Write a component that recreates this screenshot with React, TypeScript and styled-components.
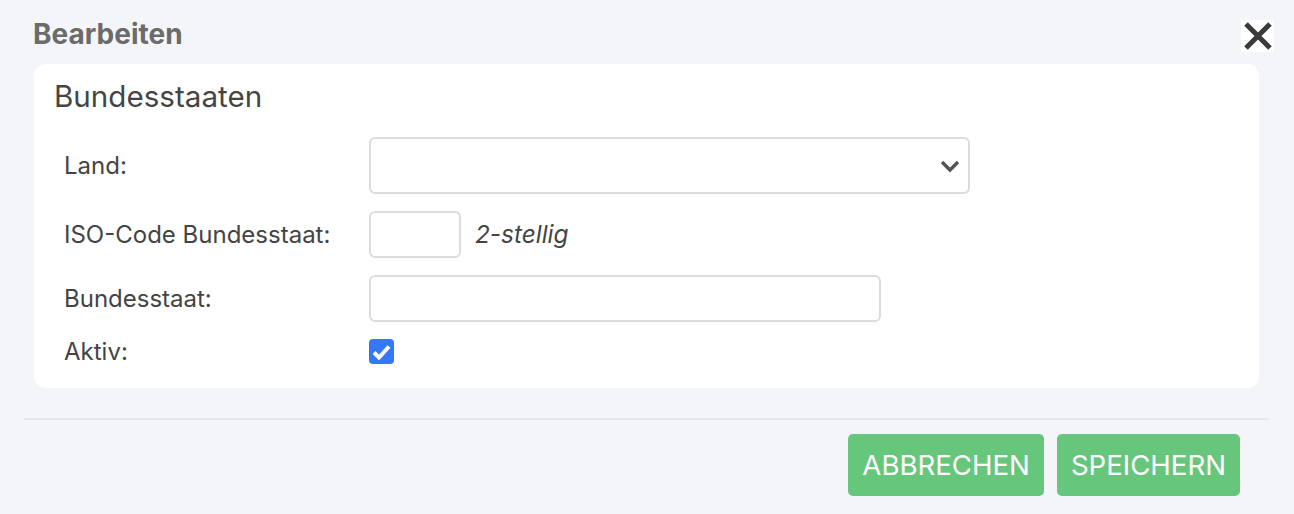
import * as React from 'react';
import styled, { createGlobalStyle } from 'styled-components';

const GlobalStyle = createGlobalStyle`
  html, body {
    margin: 0;
    padding: 0;
    background: #f4f5f9;
    font-family: Inter, "Liberation Sans", sans-serif;
  }
`;

const Page = styled.div`
  width: 1294px;
  height: 514px;
  box-sizing: border-box;
  padding: 19px 20px 0 24px;
  display: flex;
  flex-direction: column;
`;

const Header = styled.div`
  display: flex;
  justify-content: space-between;
  align-items: flex-start;
  padding-left: 9px;
  height: 45px;
`;

const Title = styled.h1`
  margin: 0;
  font-size: 28px;
  line-height: 30px;
  font-weight: 700;
  color: #6b6b6b;
`;

const CloseButton = styled.button`
  width: 33px;
  height: 32px;
  margin-top: 1px;
  padding: 0;
  border: none;
  background: #ffffff;
  display: flex;
  align-items: center;
  justify-content: center;
  cursor: pointer;
`;

const Card = styled.section`
  margin-left: 10px;
  width: 1225px;
  box-sizing: border-box;
  background: #ffffff;
  border-radius: 12px;
  padding: 14px 20px 24px 20px;
`;

const CardTitle = styled.h2`
  margin: 0 0 23px 0;
  font-size: 29.6px;
  line-height: 36px;
  font-weight: 400;
  color: #444444;
`;

const Form = styled.div`
  display: flex;
  flex-direction: column;
  gap: 17px;
  padding-left: 10px;
`;

const Row = styled.div`
  display: flex;
  align-items: center;
`;

const Label = styled.label`
  width: 305px;
  flex-shrink: 0;
  font-size: 24px;
  line-height: 25px;
  color: #444444;
`;

const SelectBox = styled.div`
  width: 601px;
  height: 57px;
  box-sizing: border-box;
  border: 2px solid #dcdcdc;
  border-radius: 6px;
  background: #ffffff;
  display: flex;
  align-items: center;
  justify-content: flex-end;
  padding-right: 8px;
`;

const TextInput = styled.input<{ $width: number }>`
  width: ${({ $width }) => $width}px;
  height: 47px;
  box-sizing: border-box;
  border: 2px solid #dcdcdc;
  border-radius: 6px;
  background: #ffffff;
  outline: none;
  font: inherit;
`;

const Hint = styled.span`
  margin-left: 14px;
  font-size: 24.4px;
  line-height: 25px;
  font-style: italic;
  color: #444444;
`;

const CheckBox = styled.span`
  width: 25px;
  height: 25px;
  border-radius: 4px;
  background: #3478f6;
  display: flex;
  align-items: center;
  justify-content: center;
`;

const Divider = styled.hr`
  margin: 30px 5px 0 0;
  border: none;
  height: 2px;
  background: #e6e7ec;
`;

const Actions = styled.div`
  display: flex;
  justify-content: flex-end;
  gap: 13px;
  margin-top: 14px;
  padding-right: 34px;
`;

const ActionButton = styled.button`
  height: 62px;
  padding: 0 14px;
  border: none;
  border-radius: 5px;
  background: #66c77c;
  color: #ffffff;
  font-family: Inter, "Liberation Sans", sans-serif;
  font-size: 27.6px;
  text-transform: uppercase;
  cursor: pointer;
`;

export default function App() {
  return (
    <>
      <GlobalStyle />
      <Page>
        <Header>
          <Title>Bearbeiten</Title>
          <CloseButton aria-label="Schließen">
            <svg width="30" height="30" viewBox="0 0 30 30">
              <path
                d="M3 3 L27 27 M27 3 L3 27"
                stroke="#3a3a3a"
                strokeWidth="5"
              />
            </svg>
          </CloseButton>
        </Header>
        <Card>
          <CardTitle>Bundesstaaten</CardTitle>
          <Form>
            <Row>
              <Label>Land:</Label>
              <SelectBox>
                <svg width="20" height="14" viewBox="0 0 20 14">
                  <path
                    d="M2 3 L10 11 L18 3"
                    fill="none"
                    stroke="#555555"
                    strokeWidth="3.4"
                  />
                </svg>
              </SelectBox>
            </Row>
            <Row>
              <Label>ISO-Code Bundesstaat:</Label>
              <TextInput $width={92} />
              <Hint>2-stellig</Hint>
            </Row>
            <Row>
              <Label>Bundesstaat:</Label>
              <TextInput $width={512} />
            </Row>
            <Row>
              <Label>Aktiv:</Label>
              <CheckBox>
                <svg width="19" height="16" viewBox="0 0 19 16">
                  <path
                    d="M2 8.5 L7 13.5 L17 2.5"
                    fill="none"
                    stroke="#ffffff"
                    strokeWidth="4"
                  />
                </svg>
              </CheckBox>
            </Row>
          </Form>
        </Card>
        <Divider />
        <Actions>
          <ActionButton>Abbrechen</ActionButton>
          <ActionButton>Speichern</ActionButton>
        </Actions>
      </Page>
    </>
  );
}
